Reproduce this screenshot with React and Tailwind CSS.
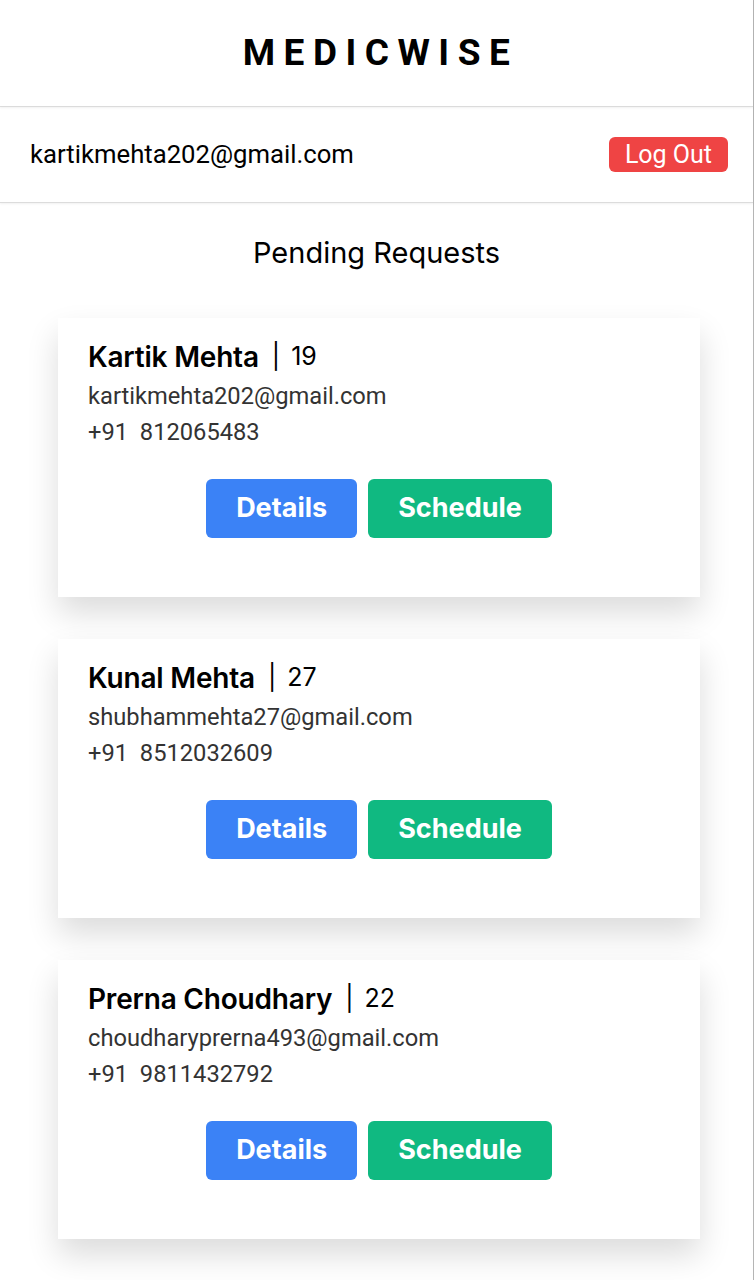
import React from 'react';

const requests = [
    { name: 'Kartik Mehta', age: 19, email: 'kartikmehta202@gmail.com', phone: '812065483' },
    { name: 'Kunal Mehta', age: 27, email: 'shubhammehta27@gmail.com', phone: '8512032609' },
    { name: 'Prerna Choudhary', age: 22, email: 'choudharyprerna493@gmail.com', phone: '9811432792' },
];

const RequestCard = ({ req }) => (
    <div className="w-[642px] ml-[58px] bg-white pt-[23px] pb-[59px] pl-[30px] pr-[30px] shadow-[0_16px_30px_rgba(0,0,0,0.14)]">
        <div className="flex items-center h-[32px] font-['Inter',sans-serif] text-black">
            <span className="text-[28px] font-semibold tracking-[-0.2px]">{req.name}</span>
            <span className="text-[25px] ml-[13px] mr-[11px]">|</span>
            <span className="text-[25px]">{req.age}</span>
        </div>
        <div className="mt-[5px] font-['Roboto',sans-serif] text-[23.7px] leading-[36px] text-[#333]">
            <p>{req.email}</p>
            <p className="whitespace-pre">{'+91  ' + req.phone}</p>
        </div>
        <div className="flex justify-center gap-[11px] mt-[29px] font-['Inter',sans-serif]">
            <button className="h-[59px] px-[30px] rounded-md bg-[#3b82f6] text-white text-[27px] font-bold">
                Details
            </button>
            <button className="h-[59px] px-[30px] rounded-md bg-[#10b981] text-white text-[27px] font-bold">
                Schedule
            </button>
        </div>
    </div>
);

const App = () => {
    return (
        <div className="min-h-screen w-full bg-white border-r border-[#b5b5b5]">
            {/* top title bar */}
            <header className="h-[107px] flex items-center justify-center border-b border-[#dcdcdc] shadow-[0_1px_2px_rgba(0,0,0,0.06)]">
                <h1 className="font-['Roboto',sans-serif] font-bold text-[37px] tracking-[8.5px] pl-[8px] text-black">
                    MEDICWISE
                </h1>
            </header>

            {/* logged in user row */}
            <div className="h-[96px] flex items-center justify-between pl-[30px] pr-[25px] border-b border-[#dcdcdc] shadow-[0_1px_2px_rgba(0,0,0,0.06)] font-['Roboto',sans-serif]">
                <span className="text-[25.7px] text-black">kartikmehta202@gmail.com</span>
                <button className="h-[35px] px-[16px] rounded-md bg-[#ef4444] text-white text-[25px] leading-none">
                    Log Out
                </button>
            </div>

            <h2 className="text-center font-['Inter',sans-serif] text-[29px] text-black mt-[28px]">
                Pending Requests
            </h2>

            <div className="flex flex-col gap-[42px] mt-[43px] pb-[40px]">
                {requests.map((req) => (
                    <RequestCard key={req.email} req={req} />
                ))}
            </div>
        </div>
    );
};

export default App;
